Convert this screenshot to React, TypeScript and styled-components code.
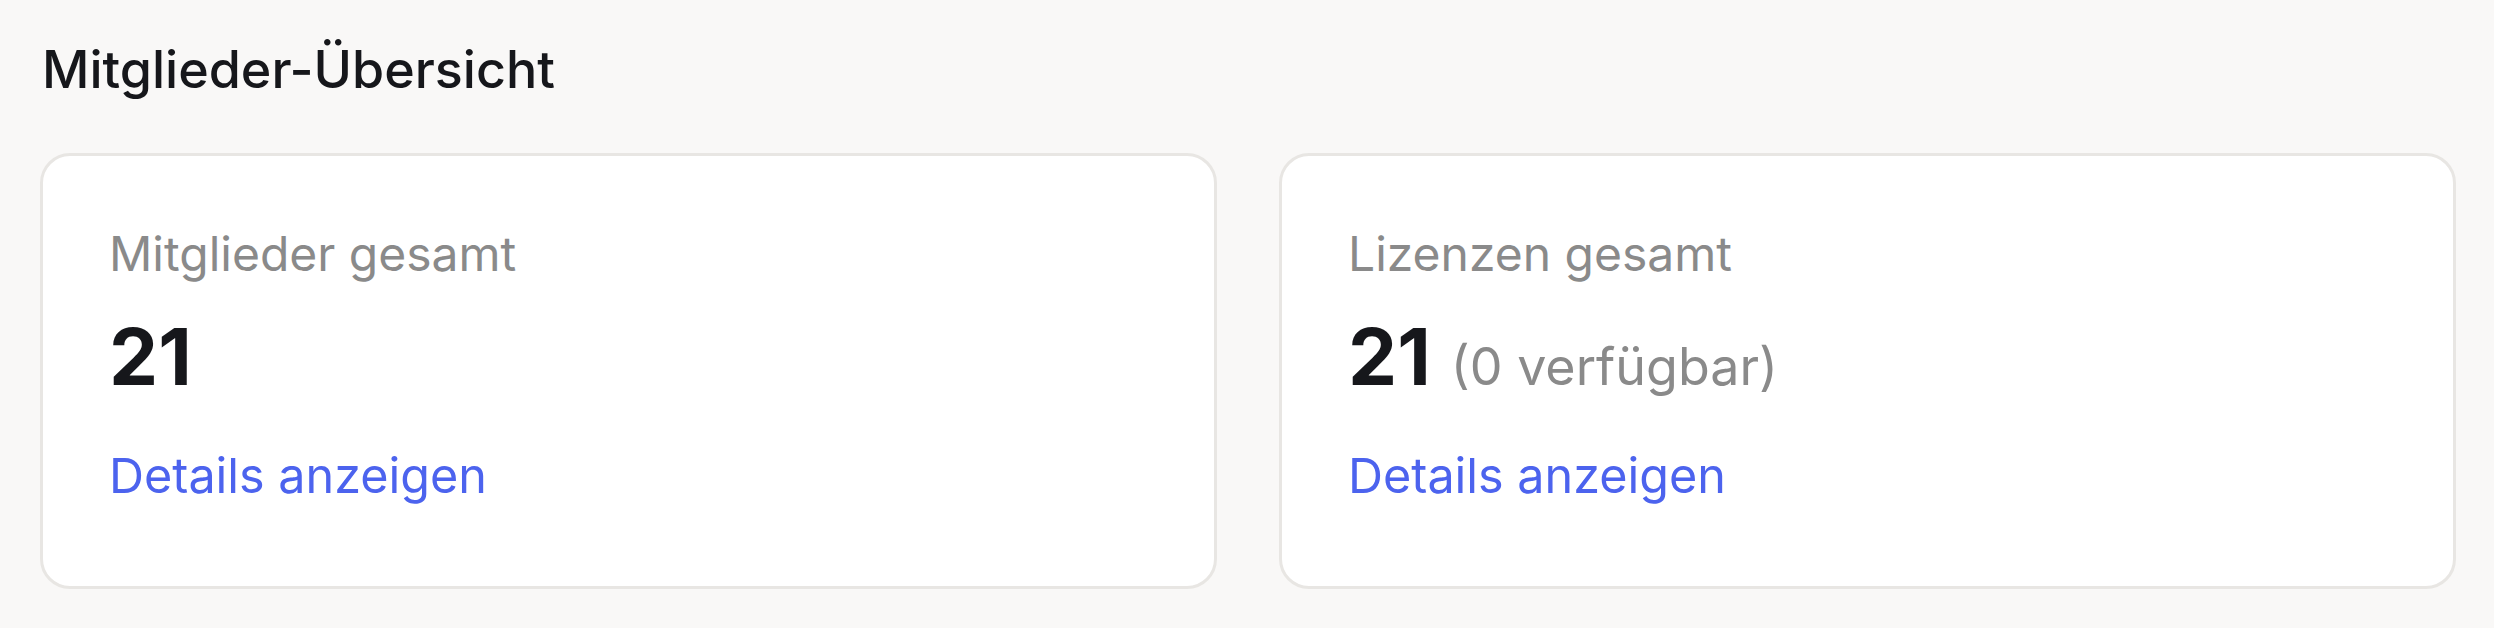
import * as React from 'react';
import styled, { createGlobalStyle } from 'styled-components';

const GlobalStyle = createGlobalStyle`
    html, body {
        margin: 0;
        padding: 0;
        background-color: #f9f8f7;
    }
    body {
        font-family: Inter, "Noto Sans", "Liberation Sans", sans-serif;
        -webkit-font-smoothing: antialiased;
    }
`;

const Page = styled.section`
    padding: 34px 38px 40px 40px;
`;

const Heading = styled.h2`
    margin: 0 0 47px 0;
    padding-left: 2px;
    font-size: 52px;
    font-weight: 500;
    line-height: 72px;
    color: #16171b;
`;

const CardGrid = styled.div`
    display: grid;
    grid-template-columns: 1fr 1fr;
    gap: 62px;
`;

const Card = styled.div`
    display: flex;
    flex-direction: column;
    background-color: #ffffff;
    border: 3px solid #e8e6e3;
    border-radius: 30px;
    padding: 62px 64px 0 66px;
    height: 436px;
    box-sizing: border-box;
`;

const Label = styled.div`
    font-size: 48px;
    line-height: 72px;
    color: #8a8a8a;
`;

const ValueRow = styled.div`
    display: flex;
    align-items: baseline;
    gap: 20px;
    margin-top: 19px;
`;

const Value = styled.span`
    font-size: 78px;
    font-weight: 700;
    line-height: 96px;
    color: #16171b;
`;

const Note = styled.span`
    font-size: 52px;
    color: #8a8a8a;
`;

const DetailsLink = styled.a`
    align-self: flex-start;
    margin-top: 35px;
    font-size: 48.5px;
    line-height: 72px;
    color: #4c63ee;
    text-decoration: none;
    cursor: pointer;
`;

type StatProps = {
    label: string;
    value: number;
    note?: string;
};

const StatCard = ({ label, value, note }: StatProps) => (
    <Card>
        <Label>{label}</Label>
        <ValueRow>
            <Value>{value}</Value>
            {note && <Note>{note}</Note>}
        </ValueRow>
        <DetailsLink href="#">Details anzeigen</DetailsLink>
    </Card>
);

const App = () => (
    <>
        <GlobalStyle />
        <Page>
            <Heading>Mitglieder-Übersicht</Heading>
            <CardGrid>
                <StatCard label="Mitglieder gesamt" value={21} />
                <StatCard label="Lizenzen gesamt" value={21} note="(0 verfügbar)" />
            </CardGrid>
        </Page>
    </>
);

export default App;
